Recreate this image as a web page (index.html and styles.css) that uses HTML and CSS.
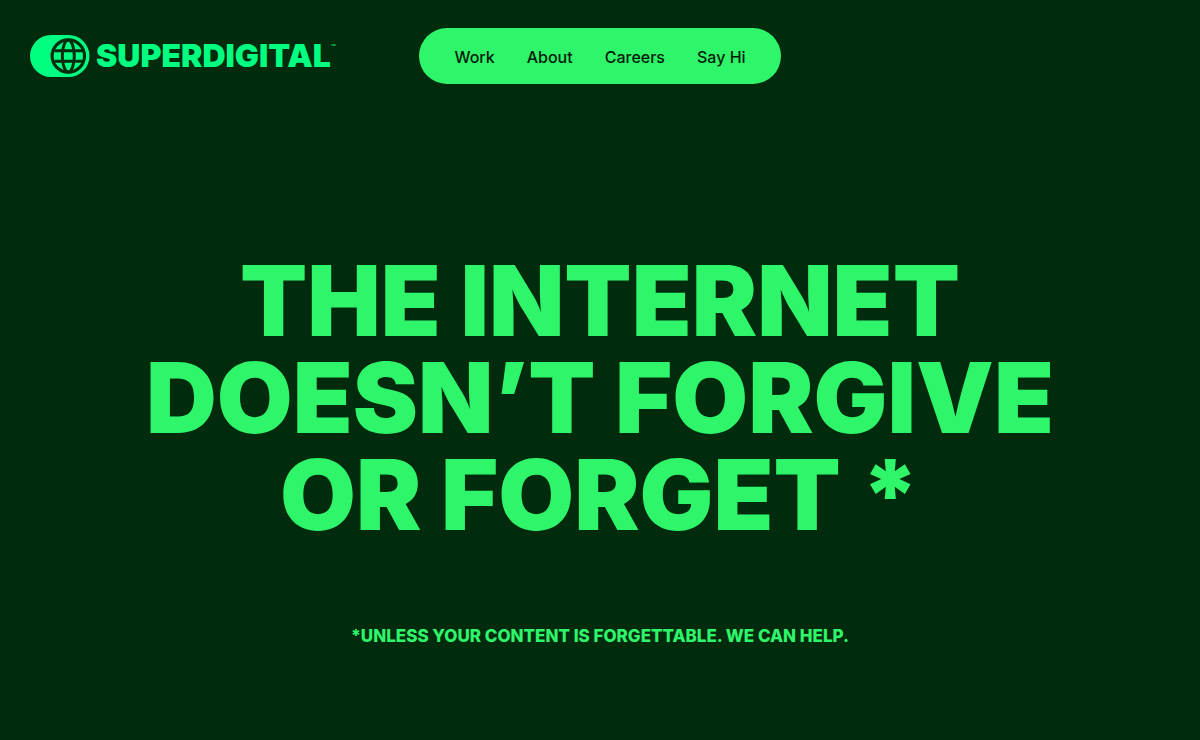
FILE: index.html
```html
<!DOCTYPE html>
<html lang="en">
<head>
<meta charset="utf-8">
<meta name="viewport" content="width=device-width, initial-scale=1">
<title>Superdigital</title>
<link rel="stylesheet" href="styles.css">
</head>
<body>
<header class="header">
  <a class="logo" href="#">
    <svg class="logo-mark" viewBox="0 0 60 42" aria-hidden="true">
      <rect class="mark-fill" width="59.500" height="42" rx="21"/>
      <circle class="mark-disc" cx="38.300" cy="21" r="17.800"/>
      <circle class="mark-fill" cx="38.300" cy="21" r="14.600"/>
      <g class="mark-lines">
        <path d="M24.500 15.700h27.600M24.500 26.300h27.600"/>
        <ellipse cx="38.300" cy="21" rx="6" ry="16"/>
      </g>
    </svg>
    <span class="logo-text">SUPERDIGITAL</span><span class="logo-tm">™</span>
  </a>
  <nav class="nav">
    <a href="#">Work</a>
    <a href="#">About</a>
    <a href="#">Careers</a>
    <a href="#">Say Hi</a>
  </nav>
</header>
<main class="hero">
  <h1 class="headline">THE INTERNET<br>DOESN’T FORGIVE<br>OR FORGET *</h1>
  <p class="footnote">*UNLESS YOUR CONTENT IS FORGETTABLE. WE CAN HELP.</p>
</main>
</body>
</html>
```
FILE: styles.css
```css
* { box-sizing: border-box; }
body {
  margin: 0;
  min-height: 100vh;
  background: #002b0d;
  color: #2ff56b;
  font-family: Inter, "Liberation Sans", sans-serif;
}
.header {
  display: grid;
  grid-template-columns: 1fr auto 1fr;
  align-items: center;
  padding: 28px 30px 0;
}
.logo {
  display: flex;
  align-items: center;
  color: #00ff80;
  text-decoration: none;
}
.logo-mark { width: 60px; height: 42px; flex: none; }
.mark-fill { fill: #00ff80; }
.mark-disc { fill: #002b0d; }
.mark-lines { fill: none; stroke: #002b0d; stroke-width: 3; }
.logo-text { margin-left: 6px; font-size: 32px; line-height: 42px; font-weight: 900; }
.logo-tm { align-self: flex-start; font-size: 8px; line-height: 24px; }
.nav {
  display: flex;
  gap: 32px;
  padding: 17px 35px 15px;
  border-radius: 28px;
  background: #2ff56b;
}
.nav a {
  color: #001a08;
  font-size: 16px;
  line-height: 24px;
  font-weight: 500;
  text-decoration: none;
  white-space: nowrap;
}
.hero { text-align: center; padding: 168px 24px 88px; }
.headline { margin: 0; font-size: 98px; line-height: 97px; font-weight: 900; }
.footnote { margin: 80px 0 0; font-size: 17px; line-height: 26px; font-weight: 800; }
```
